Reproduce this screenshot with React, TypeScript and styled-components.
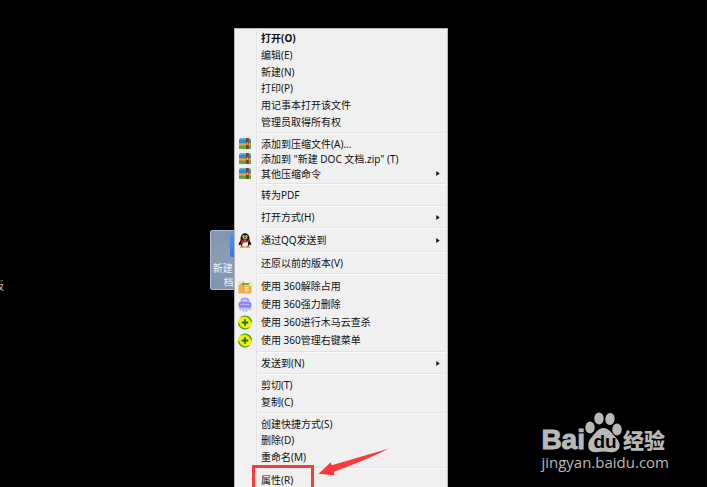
import React from 'react';
import styled, { createGlobalStyle } from 'styled-components';

const GlobalStyle = createGlobalStyle`
  * { box-sizing: border-box; }
  body { margin: 0; background: #fff; font-family: "Noto Sans", "Noto Sans CJK SC", sans-serif; }
`;

const Desktop = styled.main`
  position: relative;
  height: 100vh;
  margin-right: 2px;
  overflow: hidden;
  background: #000;
`;

const ClippedLabel = styled.span`
  position: absolute;
  left: -7px;
  top: 278px;
  font-size: 11px;
  line-height: 15px;
  color: #bbb;
`;

const FileTile = styled.button`
  position: absolute;
  left: 210px;
  top: 230px;
  width: 62px;
  height: 60px;
  padding: 2px 0 0;
  display: flex;
  flex-direction: column;
  align-items: center;
  border: 1px solid #a9bdd6;
  border-radius: 2px;
  background: linear-gradient(#8295af, #8d9cb1 50%, #7d92b3);
  color: #eef3fa;
  font-family: inherit;
  font-size: 10px;
  line-height: 14px;
`;

const FileGlyph = styled.span`
  width: 22px;
  height: 24px;
  margin-bottom: 4px;
  border-radius: 2px;
  background: linear-gradient(#4f94f3, #2f78e6);
`;

const Menu = styled.div`
  position: absolute;
  left: 234px;
  top: 28px;
  width: 214px;
  padding: 1px 1px 0;
  border: 1px solid #b5b5b5;
  background: linear-gradient(to right, #f1f1f1 21px, #e4e4e4 21px, #e4e4e4 22px, #f7f7f7 22px, #f7f7f7 23px, #f0f0f0 23px);
`;

const Group = styled.div<{ $height: number }>`
  display: flex;
  flex-direction: column;
  min-height: ${(p) => p.$height}px;
`;

const Separator = styled.div`
  height: 2px;
  margin: 2px 1px 2px 23px;
  border-top: 1px solid #e2e2e2;
  border-bottom: 1px solid #fafafa;
`;

const Item = styled.button<{ $bold?: boolean }>`
  flex: 1;
  display: grid;
  grid-template-columns: 16px 1fr 6px;
  column-gap: 8px;
  align-items: center;
  width: 100%;
  padding: 0 4px 0 1px;
  border: 0;
  background: none;
  color: #111;
  font-family: inherit;
  font-size: 10px;
  line-height: 14px;
  font-weight: ${(p) => (p.$bold ? 700 : 400)};
  text-align: left;
  white-space: nowrap;
`;

const Icon = styled.svg`
  display: block;
  width: 16px;
  height: 15px;
`;

const Chevron = styled.svg`
  display: block;
  width: 4px;
  height: 5px;
`;

const Highlight = styled.div`
  position: absolute;
  left: 252px;
  top: 465px;
  width: 62px;
  height: 30px;
  border: 3px solid #fb3a3a;
`;

const Arrow = styled.svg`
  position: absolute;
  left: 318px;
  top: 447px;
  width: 72px;
  height: 30px;
`;

const Brand = styled.a`
  position: absolute;
  right: 38px;
  bottom: 16px;
  color: #b8b8b8;
  text-decoration: none;
`;

const BrandRow = styled.span`
  display: flex;
  align-items: flex-end;
  height: 43px;
`;

const BrandLatin = styled.span`
  font: 700 28px/28px "Liberation Sans", sans-serif;
  -webkit-text-stroke: 1px #b8b8b8;
`;

const BrandHan = styled.span`
  margin-left: 1px;
  font: 900 21px/29px "Noto Sans CJK SC", sans-serif;
`;

const Paw = styled.svg`
  width: 37px;
  height: 43px;
`;

const BrandUrl = styled.span`
  display: block;
  font-family: "Open Sans", sans-serif;
  font-size: 15px;
  line-height: 17px;
`;

const ArchiveIcon = () => (
  <Icon viewBox="0 0 16 14" aria-hidden="true">
    <path d="M3 1.500h10l1 2H2z" fill="#67b9e8" />
    <rect x="2" y="3" width="12" height="3.500" fill="#2d8fd8" />
    <rect x="2" y="6.500" width="12" height="3" fill="#f0a33c" />
    <rect x="2" y="9.500" width="12" height="3" fill="#5fae3c" />
    <path d="M2 6.500h12M2 9.500h12" stroke="#35658a" strokeWidth=".4" />
    <rect x="9" y="1.500" width="2.800" height="11" fill="#80401e" />
    <rect x="9.500" y="6" width="1.800" height="2.500" fill="#e0b65c" />
  </Icon>
);

const PenguinIcon = () => (
  <Icon viewBox="1 0 14 16" aria-hidden="true">
    <path d="M3.500 8C1.500 10 1 12 1.500 13l2-1zM12.500 8c2 2 2.500 4 2 5l-2-1z" fill="#111" />
    <ellipse cx="8" cy="10" rx="5.500" ry="5" fill="#111" />
    <ellipse cx="8" cy="11.500" rx="3.300" ry="3.500" fill="#fff" />
    <path d="M3.200 7C3.200 2.500 5 .3 8 .3s4.800 2.200 4.800 6.700z" fill="#111" />
    <ellipse cx="6.500" cy="3.800" rx="1.100" ry="1.500" fill="#fff" />
    <ellipse cx="9.500" cy="3.800" rx="1.100" ry="1.500" fill="#fff" />
    <circle cx="6.800" cy="4" r=".5" />
    <circle cx="9.200" cy="4" r=".5" />
    <ellipse cx="8" cy="6.200" rx="2.600" ry=".8" fill="#f7a81b" />
    <path d="M3.200 7.200c3 1.600 6.600 1.600 9.600 0l.3 1.700C9.500 10.500 6.500 10.500 5.800 10.100V12H4.200V9.400l-1.300-.6z" fill="#e3202b" />
    <ellipse cx="5.200" cy="14.800" rx="2.700" ry="1" fill="#c98a2a" />
    <ellipse cx="10.800" cy="14.800" rx="2.700" ry="1" fill="#c98a2a" />
  </Icon>
);

const FolderIcon = () => (
  <Icon viewBox="0 0 16 15" aria-hidden="true">
    <path d="M1.500 2h5l1 1h7v6h-13z" fill="#f9dc9a" />
    <path d="M4 3h8v3H4z" fill="#fff4d5" />
    <path d="M3.500 5.500L7 2.500V4h5v2H7v1.500z" fill="#64b33c" />
    <path d="M1.500 6h4l1 1h8v6.500q0 1-1 1h-11q-1 0-1-1z" fill="#f4aa48" />
    <path d="M11.500 8.500h-3V12H11v-2H8.500" stroke="#ffe9bd" fill="none" />
  </Icon>
);

const ShredIcon = () => (
  <Icon viewBox="0 0 16 15" aria-hidden="true">
    <path d="M3.500 6V3.500Q3.500.5 8 .5t4.500 3V6z" fill="#a79ffb" />
    <rect x="1.500" y="5" width="13" height="6" rx="2" fill="#8f85f6" />
    <path d="M3 7.500h10" stroke="#b9b2ff" />
    <path d="M3.500 10.500v2.500M6.500 10.500v4M9.500 10.500v4M12.500 10.500v2.500" stroke="#b3adfa" strokeWidth="2" />
    <path d="M6 3.500h4" stroke="#e8e5ff" />
  </Icon>
);

const GuardIcon = () => (
  <Icon viewBox="0 0 16 16" aria-hidden="true">
    <circle cx="8" cy="8" r="7.500" fill="#f9ea14" />
    <path d="M2.300 3.200A7.500 7.500 0 0 1 15.500 8.500L13.500 6A6 6 0 0 0 6 2.200zM13.700 12.800A7.500 7.500 0 0 1 .5 7.500L2.500 10A6 6 0 0 0 10 13.800z" fill="#45ac1c" />
    <path d="M8 4.500v7M4.500 8h7" stroke="#16791c" strokeWidth="1.900" />
  </Icon>
);

type Entry = { label: string; icon?: React.ComponentType; bold?: boolean; submenu?: boolean };

const groups: { height: number; items: Entry[] }[] = [
  {
    height: 100,
    items: [
      { label: '打开(O)', bold: true },
      { label: '编辑(E)' },
      { label: '新建(N)' },
      { label: '打印(P)' },
      { label: '用记事本打开该文件' },
      { label: '管理员取得所有权' },
    ],
  },
  {
    height: 45,
    items: [
      { label: '添加到压缩文件(A)...', icon: ArchiveIcon },
      { label: '添加到 "新建 DOC 文档.zip" (T)', icon: ArchiveIcon },
      { label: '其他压缩命令', icon: ArchiveIcon, submenu: true },
    ],
  },
  { height: 16, items: [{ label: '转为PDF' }] },
  { height: 16, items: [{ label: '打开方式(H)', submenu: true }] },
  { height: 18, items: [{ label: '通过QQ发送到', icon: PenguinIcon, submenu: true }] },
  { height: 16, items: [{ label: '还原以前的版本(V)' }] },
  {
    height: 72,
    items: [
      { label: '使用 360解除占用', icon: FolderIcon },
      { label: '使用 360强力删除', icon: ShredIcon },
      { label: '使用 360进行木马云查杀', icon: GuardIcon },
      { label: '使用 360管理右键菜单', icon: GuardIcon },
    ],
  },
  { height: 16, items: [{ label: '发送到(N)', submenu: true }] },
  { height: 33, items: [{ label: '剪切(T)' }, { label: '复制(C)' }] },
  { height: 49, items: [{ label: '创建快捷方式(S)' }, { label: '删除(D)' }, { label: '重命名(M)' }] },
  { height: 18, items: [{ label: '属性(R)' }] },
];

const MenuItem = ({ label, icon: Glyph, bold, submenu }: Entry) => (
  <Item type="button" role="menuitem" $bold={bold} aria-haspopup={submenu ? 'menu' : undefined}>
    {Glyph ? <Glyph /> : <span />}
    <span>{label}</span>
    {submenu && (
      <Chevron viewBox="0 0 4 6" aria-hidden="true">
        <path d="M0 0l4 3-4 3z" fill="#111" />
      </Chevron>
    )}
  </Item>
);

export default function App() {
  return (
    <>
      <GlobalStyle />
      <Desktop>
        <ClippedLabel>板</ClippedLabel>
        <FileTile type="button">
          <FileGlyph />
          <span>新建 DOC 文</span>
          <span>档.docx</span>
        </FileTile>
        <Menu role="menu">
          {groups.map((group, index) => (
            <React.Fragment key={group.items[0].label}>
              {index > 0 && <Separator role="separator" />}
              <Group role="group" $height={group.height}>
                {group.items.map((item) => (
                  <MenuItem key={item.label} {...item} />
                ))}
              </Group>
            </React.Fragment>
          ))}
        </Menu>
        <Highlight />
        <Arrow viewBox="0 0 72 30" aria-hidden="true">
          <path d="M.5 26.700L12.700 15.300l1 3L71 1.500Q46 14 16 24.700l.3 3.600z" fill="#fb3a3a" />
        </Arrow>
        <Brand href="#jingyan">
          <BrandRow>
            <BrandLatin>Bai</BrandLatin>
            <Paw viewBox="0 0 37 43" aria-hidden="true">
              <g fill="#b8b8b8">
                <ellipse cx="5" cy="16.500" rx="4.700" ry="6" />
                <ellipse cx="14" cy="7.500" rx="4.700" ry="6" />
                <ellipse cx="25" cy="8" rx="4.700" ry="6" transform="rotate(8 25 8)" />
                <ellipse cx="32" cy="18.500" rx="4.700" ry="6" />
                <path d="M11 21Q18.500 13 26 21L32 28Q36 33 34 37.500 31 42 24 41 18.500 40 13 41 5 42 3.500 37 2.500 31 6 27z" />
              </g>
              <text x="20" y="37" textAnchor="middle" fill="#000" fontFamily="Liberation Sans, sans-serif" fontWeight="700" fontSize="19">du</text>
            </Paw>
            <BrandHan>经验</BrandHan>
          </BrandRow>
          <BrandUrl>jingyan.baidu.com</BrandUrl>
        </Brand>
      </Desktop>
    </>
  );
}
